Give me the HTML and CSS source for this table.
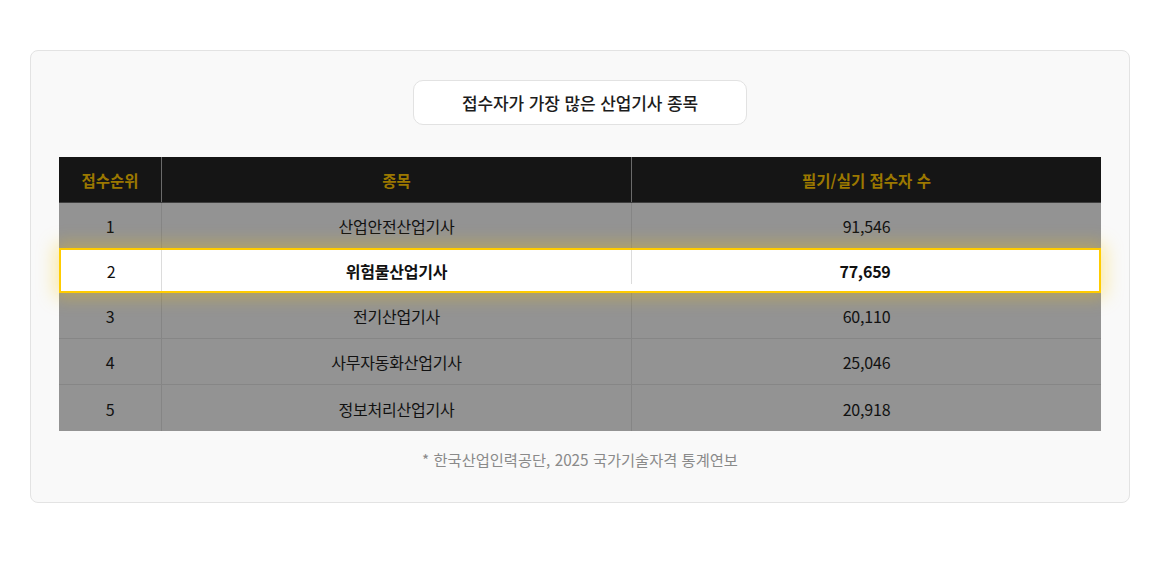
FILE: index.html
```html
<!DOCTYPE html>
<html lang="ko">
<head>
<meta charset="utf-8">
<link rel="stylesheet" href="styles.css">
</head>
<body>
<section class="card">
  <h2 class="title">접수자가 가장 많은 산업기사 종목</h2>
  <div class="table">
    <div class="row head">
      <div class="cell">접수순위</div>
      <div class="cell">종목</div>
      <div class="cell">필기/실기 접수자 수</div>
    </div>
    <div class="row">
      <div class="cell">1</div>
      <div class="cell">산업안전산업기사</div>
      <div class="cell">91,546</div>
    </div>
    <div class="row hl">
      <div class="cell rank">2</div>
      <div class="cell">위험물산업기사</div>
      <div class="cell">77,659</div>
    </div>
    <div class="row">
      <div class="cell">3</div>
      <div class="cell">전기산업기사</div>
      <div class="cell">60,110</div>
    </div>
    <div class="row">
      <div class="cell">4</div>
      <div class="cell">사무자동화산업기사</div>
      <div class="cell">25,046</div>
    </div>
    <div class="row last">
      <div class="cell">5</div>
      <div class="cell">정보처리산업기사</div>
      <div class="cell">20,918</div>
    </div>
  </div>
  <p class="note">* 한국산업인력공단, 2025 국가기술자격 통계연보</p>
</section>
</body>
</html>
```
FILE: styles.css
```css
* { box-sizing: border-box; }
html, body { margin: 0; padding: 0; background: #fff; }
body {
  font-family: "Noto Sans CJK KR", "Noto Sans", sans-serif;
  color: #111;
  padding: 50px 30px 0;
}
.card {
  width: 1100px;
  height: 453px;
  background: #f9f9f9;
  border: 1px solid #e3e3e3;
  border-radius: 8px;
  padding: 29px 28px 0;
  display: flex;
  flex-direction: column;
  align-items: center;
}
.title {
  margin: 0;
  width: 334px;
  height: 45px;
  background: #fff;
  border: 1px solid #e2e2e2;
  border-radius: 10px;
  font-size: 17px;
  font-weight: 500;
  color: #1c1c1c;
  display: flex;
  align-items: center;
  justify-content: center;
  letter-spacing: -0.1px;
}
.table {
  margin-top: 32px;
  width: 1042px;
  display: flex;
  flex-direction: column;
}
.row {
  display: grid;
  grid-template-columns: 102px 470px 470px;
  height: 46px;
  background: #939393;
  border-bottom: 1px solid #868686;
  font-size: 16px;
  letter-spacing: -0.2px;
}
.row .cell {
  display: flex;
  align-items: center;
  justify-content: center;
  padding-top: 1px;
}
.row .cell + .cell { border-left: 1px solid #858585; }
.row.head {
  background: #151515;
  border-bottom: 1px solid #3e3e3e;
  color: #9b7800;
  font-weight: 700;
  font-size: 15.5px;
  letter-spacing: 0;
}
.row.head .cell + .cell { border-left: 1px solid #6a6a6a; }
.row.last { border-bottom: none; height: 46px; }
.row.hl {
  position: relative;
  z-index: 1;
  margin-top: -1px;
  height: 45px;
  background: #fff;
  border: 2px solid #ffcc00;
  box-shadow: 0 0 18px 4px rgba(255, 204, 0, 0.35);
  font-weight: 700;
  color: #111;
  grid-template-columns: 100px 470px 468px;
}
.row.hl .cell.rank { font-weight: 400; }
.row.hl .cell + .cell { border-left: 1px solid #dcdcdc; }
.row.hl .cell:last-child { border-left: none; position: relative; }
.row.hl .cell:last-child::before {
  content: "";
  position: absolute;
  left: 0;
  top: 0;
  height: 34px;
  border-left: 1px solid #dcdcdc;
}
.note {
  margin: 17px 0 0;
  font-size: 15.3px;
  color: #8a8a8a;
  line-height: 22px;
}
```
